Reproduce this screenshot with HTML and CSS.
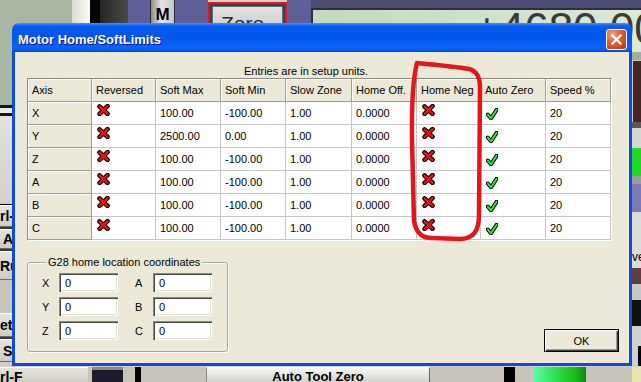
FILE: index.html
```html
<!DOCTYPE html>
<html lang="en">
<head>
  <meta charset="UTF-8">
  <title>Motor Home/SoftLimits</title>
  <link rel="stylesheet" href="styles.css">
</head>
<body>
  <!-- shared icons -->
  <svg class="defs" width="0" height="0">
    <symbol id="ico-x" viewBox="0 0 13 12">
      <path d="M2.5 2.5 L10.5 9.8 M10.5 2.2 L2.6 9.8" fill="none" stroke="#000" stroke-width="4.6" stroke-linecap="round"/>
      <path d="M2.5 2.5 L10.5 9.8 M10.5 2.2 L2.6 9.8" fill="none" stroke="#f01010" stroke-width="2.4" stroke-linecap="round"/>
    </symbol>
    <symbol id="ico-ok" viewBox="0 0 12 12">
      <path d="M1.8 6.5 L5 10.3 L10.6 1.8" fill="none" stroke="#000" stroke-width="4" stroke-linecap="round" stroke-linejoin="round"/>
      <path d="M1.8 6.5 L5 10.3 L10.6 1.8" fill="none" stroke="#22ee33" stroke-width="2" stroke-linecap="round" stroke-linejoin="round"/>
    </symbol>
  </svg>

  <div class="desk">
    <!-- Mach3 screen behind the dialog -->
    <div class="top">
      <div class="sage"></div>
      <div class="cream"></div>
      <div class="blk"></div>
      <div class="dark"></div>
      <div class="purp p1"></div>
      <div class="mbtn">M</div>
      <div class="purp p2"></div>
      <div class="zero"><div class="zero-in"><div class="zero-face">Zero</div></div></div>
      <div class="purp p3"></div>
      <div class="dro"><div class="dro-in"><div class="dro-num">+4680.000</div></div></div>
    </div>

    <div class="mid">
      <div class="lstrip">
        <div class="l-sage"></div>
        <div class="l-blk"></div>
        <div class="l-lite"></div>
        <div class="l-blk"></div>
        <div class="l-grey"></div>
        <div class="l-line"></div>
        <div class="lb h22">rl-</div>
        <div class="l-sep"></div>
        <div class="lb h20 ind">A</div>
        <div class="l-sep"></div>
        <div class="lb h29">Ru</div>
        <div class="l-grey2"></div>
        <div class="lb h24">et</div>
        <div class="l-sep"></div>
        <div class="lb h23 ind">S</div>
        <div class="l-end"></div>
      </div>
      <div class="gap"></div>
      <div class="rstrip">
        <div class="r-a"></div>
        <div class="r-maroon"></div>
        <div class="r-b"></div>
        <div class="r-c"></div>
        <div class="r-green"></div>
        <div class="r-d"></div>
        <div class="r-blue"></div>
        <div class="r-lite">ve</div>
        <div class="r-maroon2"></div>
        <div class="r-e"></div>
        <div class="r-black"></div>
        <div class="r-f"><span class="r-bar"></span></div>
      </div>
    </div>

    <div class="bot">
      <div class="bb-btn">rl-F</div>
      <div class="bb-g w4"></div>
      <div class="bb-sq"></div>
      <div class="bb-g w12"></div>
      <div class="bb-k w6"></div>
      <div class="bb-g w65"></div>
      <div class="bb-atz">Auto Tool Zero</div>
      <div class="bb-g w74"></div>
      <div class="bb-k w11"></div>
      <div class="bb-g w18"></div>
      <div class="bb-green"></div>
      <div class="bb-g w46"></div>
      <div class="bb-cream"></div>
    </div>

    <!-- the dialog -->
    <div class="dlg">
      <div class="dlg-title">
        <span>Motor Home/SoftLimits</span>
        <div class="dlg-close">
          <svg width="13" height="13" viewBox="0 0 13 13"><path d="M2.5 2.5 L10.5 10.5 M10.5 2.5 L2.5 10.5" stroke="#fff" stroke-width="2.2" stroke-linecap="square"/></svg>
        </div>
      </div>
      <div class="dlg-body">
        <div class="note">Entries are in setup units.</div>
        <div class="grid">
          <div class="c h">Axis</div><div class="c h">Reversed</div><div class="c h">Soft Max</div><div class="c h">Soft Min</div><div class="c h">Slow Zone</div><div class="c h">Home Off.</div><div class="c h">Home Neg</div><div class="c h">Auto Zero</div><div class="c h">Speed %</div>

          <div class="c h">X</div><div class="c ic"><svg class="ico"><use href="#ico-x"/></svg></div><div class="c">100.00</div><div class="c">-100.00</div><div class="c">1.00</div><div class="c">0.0000</div><div class="c ic"><svg class="ico"><use href="#ico-x"/></svg></div><div class="c ic"><svg class="chk"><use href="#ico-ok"/></svg></div><div class="c">20</div>

          <div class="c h">Y</div><div class="c ic"><svg class="ico"><use href="#ico-x"/></svg></div><div class="c">2500.00</div><div class="c">0.00</div><div class="c">1.00</div><div class="c">0.0000</div><div class="c ic"><svg class="ico"><use href="#ico-x"/></svg></div><div class="c ic"><svg class="chk"><use href="#ico-ok"/></svg></div><div class="c">20</div>

          <div class="c h">Z</div><div class="c ic"><svg class="ico"><use href="#ico-x"/></svg></div><div class="c">100.00</div><div class="c">-100.00</div><div class="c">1.00</div><div class="c">0.0000</div><div class="c ic"><svg class="ico"><use href="#ico-x"/></svg></div><div class="c ic"><svg class="chk"><use href="#ico-ok"/></svg></div><div class="c">20</div>

          <div class="c h">A</div><div class="c ic"><svg class="ico"><use href="#ico-x"/></svg></div><div class="c">100.00</div><div class="c">-100.00</div><div class="c">1.00</div><div class="c">0.0000</div><div class="c ic"><svg class="ico"><use href="#ico-x"/></svg></div><div class="c ic"><svg class="chk"><use href="#ico-ok"/></svg></div><div class="c">20</div>

          <div class="c h">B</div><div class="c ic"><svg class="ico"><use href="#ico-x"/></svg></div><div class="c">100.00</div><div class="c">-100.00</div><div class="c">1.00</div><div class="c">0.0000</div><div class="c ic"><svg class="ico"><use href="#ico-x"/></svg></div><div class="c ic"><svg class="chk"><use href="#ico-ok"/></svg></div><div class="c">20</div>

          <div class="c h">C</div><div class="c ic"><svg class="ico"><use href="#ico-x"/></svg></div><div class="c">100.00</div><div class="c">-100.00</div><div class="c">1.00</div><div class="c">0.0000</div><div class="c ic"><svg class="ico"><use href="#ico-x"/></svg></div><div class="c ic"><svg class="chk"><use href="#ico-ok"/></svg></div><div class="c">20</div>
        </div>

        <div class="foot">
          <fieldset class="grp">
            <legend>G28 home location coordinates</legend>
            <div class="g28">
              <span>X</span><input type="text" value="0"><span class="lbl2">A</span><input type="text" value="0">
              <span>Y</span><input type="text" value="0"><span class="lbl2">B</span><input type="text" value="0">
              <span>Z</span><input type="text" value="0"><span class="lbl2">C</span><input type="text" value="0">
            </div>
          </fieldset>
          <button class="ok">OK</button>
        </div>
      </div>
    </div>

    <!-- red marker drawn over the screenshot -->
    <svg class="mark" viewBox="0 0 641 382">
      <path d="M417 63 C438 65 458 67 469 69 C477 71 480 77 480 88 L479 214 C479 231 474 238 461 239 L432 238 C421 238 416 232 414 221 L412 140 C411.5 100 413 78 417 63" fill="none" stroke="#e4161c" stroke-width="4.5" stroke-linecap="round" stroke-linejoin="round"/>
    </svg>
  </div>
</body>
</html>
```

FILE: styles.css
```css
/* base */
* { box-sizing: border-box; margin: 0; padding: 0; }
body { background: #d4d0c8; font-family: "Liberation Sans", Arial, sans-serif; font-size: 11px; color: #000; }
.defs { position: absolute; }
.desk { position: relative; width: 641px; height: 382px; overflow: hidden; background: #d4d0c8; }

/* background screen: top row */
.top { display: flex; height: 52px; }
.top > div, .bot > div { flex-shrink: 0; }
.sage { width: 72px; background: #a9b6a1; }
.cream { width: 18px; background: linear-gradient(90deg, #dcdbd0, #fbfbf6); }
.blk { width: 10px; background: #050505; }
.dark { width: 28px; background: linear-gradient(90deg, #262626, #4a4a4a); }
.purp { background: #5f5f99; }
.p1 { width: 22px; }
.p2 { width: 33px; }
.p3 { width: 24px; }
.mbtn {
  width: 25px; padding-top: 5px;
  background: linear-gradient(90deg, #8d8d8d, #e6e6e6 45%, #c4c4c4);
  border-left: 1px solid #2c2c2c; border-right: 1px solid #2c2c2c;
  font-weight: bold; font-size: 17px; text-align: center;
}
.zero { width: 79px; padding-top: 2px; }
.zero-in { height: 100%; border: 2px solid #e41616; background: #3d3d5c; padding: 2px; }
.zero-face {
  height: 100%; padding: 5px 0 0 8px;
  background: linear-gradient(#e2e2e2, #b9b9b9); border: 1px solid #6a6a6a;
  font-size: 21px; color: #2a2a2a;
}
.top > .dro { flex: 1 1 0; min-width: 0; background: #4f4f76; padding-top: 8px; }
.dro-in {
  height: 100%; padding-left: 161px; overflow: hidden;
  background: linear-gradient(90deg, #c3d9bd, #dbe9d6);
  border-top: 2px solid #2d2d40; border-left: 2px solid #2d2d40;
}
.dro-num { margin-top: -3px; font-size: 44px; line-height: 44px; color: #3a3a3a; white-space: nowrap; }

/* background screen: side strips */
.mid { display: flex; height: 315px; }
.gap { flex: 1; }
.lstrip, .rstrip { display: flex; flex-direction: column; overflow: hidden; flex-shrink: 0; }
.lstrip { width: 12px; }
.rstrip { width: 9px; }
.l-sage { height: 53px; background: #a9b6a1; }
.l-blk { height: 3px; background: #151515; }
.l-lite { height: 5px; background: #e8e8e4; }
.l-grey { height: 88px; background: linear-gradient(#e2e1dc, #d2d0c9); }
.l-line { height: 1px; background: #000; }
.l-sep { height: 2px; background: #3a3a3a; }
.l-grey2 { height: 33px; background: #c9c6be; }
.l-end { height: 5px; background: #d4d0c8; }
.lb {
  display: flex; align-items: center; white-space: nowrap;
  background: linear-gradient(#e6e4dc, #cfccc4);
  border-top: 1px solid #fff; border-bottom: 1px solid #6e6c66;
  font-weight: bold; font-size: 14px;
}
.lb.ind { padding-left: 3px; }
.h20 { height: 20px; }
.h22 { height: 22px; }
.h23 { height: 23px; }
.h24 { height: 24px; }
.h29 { height: 29px; }

.r-a { height: 8px; background: #a4b09e; }
.r-maroon { height: 62px; background: #4a2424; border-left: 1px solid #c8c8c8; border-top: 1px solid #c8c8c8; }
.r-b { height: 6px; background: #5c5c5c; }
.r-c { height: 20px; background: #d6d6d6; }
.r-green { height: 28px; background: #25d825; }
.r-d { height: 8px; background: #9c9c9c; }
.r-blue { height: 28px; background: #7a7ab6; }
.r-lite { height: 56px; background: #dcdcdc; padding-top: 38px; font-size: 12px; }
.r-maroon2 { height: 16px; background: #5c4040; }
.r-e { height: 16px; background: #c8c8c8; }
.r-black { height: 26px; background: #111; }
.r-f { height: 41px; background: #d0d0d0; display: flex; justify-content: flex-end; padding-top: 20px; }
.r-bar { width: 3px; height: 20px; background: #000; }

/* background screen: bottom row */
.bot { display: flex; height: 15px; }
.bb-btn {
  width: 88px; padding-top: 2px; white-space: nowrap;
  background: linear-gradient(#e6e4dc, #d0cdc5); border-top: 1px solid #fff;
  font-weight: bold; font-size: 14px; line-height: 14px;
}
.bb-g { background: #c8c4bc; }
.bb-k { background: #000; }
.w4 { width: 4px; }
.w6 { width: 6px; }
.w11 { width: 11px; }
.w12 { width: 12px; }
.w18 { width: 18px; }
.w46 { width: 46px; }
.w65 { width: 65px; }
.w74 { width: 74px; }
.bb-sq { width: 31px; background: #1b1b29; border-top: 3px solid #8c8a84; }
.bb-atz {
  width: 224px; padding-top: 2px; text-align: center;
  background: linear-gradient(#f6f6f4, #d2d2ce);
  border-left: 1px solid #8a8a8a; border-right: 1px solid #666; border-top: 1px solid #fff;
  font-weight: bold; font-size: 13px; line-height: 13px;
}
.bb-green { width: 53px; background: linear-gradient(90deg, #5cfca8, #2ee04a 45%, #1cb81c 80%, #0e8a0e); }
.bb-cream { width: 9px; background: #e8e4ae; }

/* dialog window */
.dlg { position: absolute; left: 12px; top: 23px; width: 620px; height: 343px; display: flex; flex-direction: column; }
.dlg-title {
  height: 29px; flex: none; display: flex; align-items: center; justify-content: space-between;
  padding: 3px 5px 0 6px; border-radius: 7px 7px 0 0;
  background: linear-gradient(#3d95ff, #0a5cf2 10%, #0055ea 45%, #0a64f8 85%, #0058ee 95%, #0046d0);
  color: #fff; font-weight: bold; font-size: 13px; text-shadow: 1px 1px #0f1089;
}
.dlg-close {
  width: 21px; height: 21px; display: flex; align-items: center; justify-content: center;
  border: 1px solid #fff; border-radius: 3px;
  background: radial-gradient(circle at 30% 25%, #f4a688 0%, #e2683f 35%, #d14a1e 70%, #b83612 100%);
}
.dlg-body {
  flex: 1; display: flex; flex-direction: column; align-items: flex-start;
  background: #ece9d8; border: 3px solid #0b4be0; border-top: 0;
  padding: 0 10px 0 12px;
}
.note { margin-top: 13px; line-height: 13px; padding-left: 217px; }

/* grid of axis settings */
.grid {
  display: grid; grid-template-columns: 64px 64px 65px 65px 66px 65px 64px 65px 65px; grid-auto-rows: 23px;
  border: 1px solid; border-color: #8c8a80 #fff #fff #8c8a80;
}
.c {
  display: flex; align-items: center; padding-left: 4px; white-space: nowrap;
  background: #fff; border-right: 1px solid #c6c6c6; border-bottom: 1px solid #c6c6c6;
}
.c.h { background: #ece9d8; border-color: #a09d90; box-shadow: inset 1px 1px #fff; }
.c.ic { align-items: flex-start; padding: 2px 0 0 5px; }
.ico { width: 13px; height: 12px; }
.chk { width: 12px; height: 12px; margin-top: 4px; }

/* G28 group and OK */
.foot { align-self: stretch; display: flex; justify-content: space-between; align-items: flex-end; margin-top: 15px; }
.grp {
  width: 201px; padding: 4px 0 11px 14px;
  border: 1px solid #aca899; border-radius: 3px;
  box-shadow: inset 1px 1px #fff, 1px 1px #fff;
}
.grp legend { margin-left: 4px; padding: 0 2px; line-height: 13px; background: #ece9d8; }
.g28 { display: grid; grid-template-columns: 17px 59px 35px 59px; row-gap: 5px; align-items: center; }
.g28 .lbl2 { padding-left: 17px; }
.g28 input {
  width: 59px; height: 19px; border: 0; outline: none; padding-left: 6px;
  font-family: "Liberation Sans", Arial, sans-serif; font-size: 11px; background: #fff;
  box-shadow: inset 1px 1px #8a877c, inset 2px 2px #4a4842, inset -1px -1px #fff, inset -2px -2px #e4e1d4;
}
.ok {
  width: 75px; height: 23px;
  font-family: "Liberation Sans", Arial, sans-serif; font-size: 11px;
  background: #ece9d8; border: 1px solid #000;
  box-shadow: inset 1px 1px #fff, inset -1px -1px #404040, inset -2px -2px #9d9a8c;
}

/* hand drawn marker */
.mark { position: absolute; left: 0; top: 0; width: 641px; height: 382px; pointer-events: none; }
```
